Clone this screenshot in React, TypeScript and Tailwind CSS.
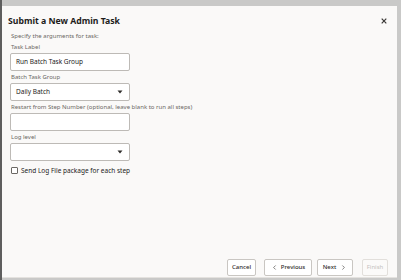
import { ChevronLeft, ChevronRight } from "lucide-react";

const Label = ({ children }: { children: React.ReactNode }) => (
  <div className="h-[8px] leading-[8px] text-[6px] text-[#6b6864] pl-px mb-[2px] whitespace-nowrap">
    {children}
  </div>
);

const Caret = () => (
  <svg width="6" height="4" viewBox="0 0 6 4" className="ml-auto">
    <path d="M0.5 0.5 L5.5 0.5 L3 3.5 Z" fill="#2f2d2b" />
  </svg>
);

const App = () => {
  return (
    <div
      className="w-[401px] h-[280px] bg-[#c9c9c8] flex pt-[6px] pb-[2px] pr-[4px] border-l-2 border-[#5e5e5e] overflow-hidden"
      style={{ fontFamily: '"Noto Sans", "Open Sans", sans-serif' }}
    >
      <div className="flex-1 flex flex-col bg-[#faf9f8] border-b border-[#e4e2df]">
        <div className="flex items-center h-[12px] mt-[9px] pl-[6px] pr-[8px]">
          <div className="text-[8.7px] font-bold text-[#1d1c1b] leading-[12px] whitespace-nowrap">
            Submit a New Admin Task
          </div>
          <svg width="6" height="6" viewBox="0 0 6 6" className="ml-auto mr-[2px]">
            <path d="M0.7 0.7 L5.3 5.3 M5.3 0.7 L0.7 5.3" stroke="#3a3836" strokeWidth="1.2" />
          </svg>
        </div>

        <div className="flex flex-col pl-[8px] mt-[5px]">
          <div className="h-[8px] leading-[8px] text-[6px] text-[#6b6864] pl-px mb-[3px]">
            Specify the arguments for task:
          </div>

          <Label>Task Label</Label>
          <div className="w-[120px] h-[18px] bg-white border border-[#bdbab6] rounded-[2px] flex items-center pl-[5px] text-[6.5px] text-[#1d1c1b] mb-[2px]">
            Run Batch Task Group
          </div>

          <Label>Batch Task Group</Label>
          <div className="w-[120px] h-[18px] bg-white border border-[#bdbab6] rounded-[2px] flex items-center pl-[5px] pr-[6px] text-[6.5px] text-[#1d1c1b] mb-[2px]">
            Daily Batch
            <Caret />
          </div>

          <Label>Restart from Step Number (optional, leave blank to run all steps)</Label>
          <div className="w-[120px] h-[18px] bg-white border border-[#bdbab6] rounded-[2px] mb-[2px]" />

          <Label>Log level</Label>
          <div className="w-[120px] h-[18px] bg-white border border-[#bdbab6] rounded-[2px] flex items-center pr-[6px]">
            <Caret />
          </div>

          <div className="flex items-center mt-[5px] pl-px h-[9px]">
            <div className="w-[7px] h-[7px] border border-[#6b6864] rounded-[1px] bg-white" />
            <span className="ml-[3px] text-[6.5px] text-[#1d1c1b] leading-[9px]">
              Send Log File package for each step
            </span>
          </div>
        </div>

        <div className="mt-auto mb-[1px] flex items-center justify-end pr-[9px] text-[6px]">
          <button className="w-[29px] h-[17px] bg-white border border-[#c9c6c2] rounded-[2px] text-[#2f2d2b] font-medium">
            Cancel
          </button>
          <button className="ml-[8px] w-[48px] h-[17px] bg-white border border-[#c9c6c2] rounded-[2px] text-[#2f2d2b] font-medium flex items-center justify-center gap-[3px]">
            <ChevronLeft size={7} strokeWidth={2} />
            Previous
          </button>
          <button className="ml-[5px] w-[36px] h-[17px] bg-white border border-[#c9c6c2] rounded-[2px] text-[#2f2d2b] font-medium flex items-center justify-center gap-[4px]">
            Next
            <ChevronRight size={7} strokeWidth={2} />
          </button>
          <button className="ml-[9px] w-[26px] h-[17px] bg-[#fbfaf9] border border-[#e2dfdb] rounded-[2px] text-[#c4c1bd]">
            Finish
          </button>
        </div>
      </div>
    </div>
  );
};

export default App;
